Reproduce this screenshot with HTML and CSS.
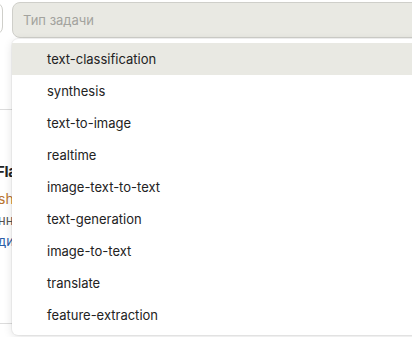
FILE: index.html
```html
<!DOCTYPE html>
<html lang="ru">
<head>
    <meta charset="UTF-8">
    <meta name="viewport" content="width=device-width, initial-scale=1.0">
    <title>Тип задачи</title>
    <link rel="stylesheet" href="styles.css">
</head>
<body>
    <div class="page">
        <div class="filters">
            <div class="field field-prev"></div>
            <div class="field field-select">
                <span class="placeholder">Тип задачи</span>
            </div>
        </div>

        <div class="card">
            <h3 class="card-title">Flash</h3>
            <div class="card-author">shibing</div>
            <div class="card-text">нн</div>
            <div class="card-link">ди</div>
        </div>

        <ul class="dropdown">
            <li class="option active">text-classification</li>
            <li class="option">synthesis</li>
            <li class="option">text-to-image</li>
            <li class="option">realtime</li>
            <li class="option">image-text-to-text</li>
            <li class="option">text-generation</li>
            <li class="option">image-to-text</li>
            <li class="option">translate</li>
            <li class="option">feature-extraction</li>
        </ul>
    </div>
</body>
</html>
```

FILE: styles.css
```css
body {
    font-family: "Inter", "Noto Sans", sans-serif;
    background-color: #fff;
    color: #222;
    margin: 0;
    overflow: hidden;
}
.page {
    position: relative;
    height: 337px;
}
.filters {
    display: flex;
    gap: 9px;
    padding-top: 2px;
}
.field {
    height: 33px;
    border: 1px solid #cfcfca;
    border-radius: 8px;
    background-color: #e9e9e3;
    box-sizing: border-box;
}
.field-prev {
    flex: 0 0 100px;
    margin-left: -97px;
    background-color: #fff;
}
.field-select {
    flex: 1;
    height: 36px;
    margin-right: -20px;
    display: flex;
    align-items: center;
    padding-left: 10px;
}
.placeholder {
    font-size: 13px;
    color: #a3a39e;
}
.card {
    margin-top: 71px;
    border-top: 1px solid #dcdcdc;
    padding-top: 52px;
    padding-left: 0;
    height: 215px;
    border-bottom: 1px solid #dcdcdc;
    box-sizing: border-box;
    text-indent: -2px;
}
.card-title {
    margin: 0 0 6px -2px;
    font-size: 15px;
    font-weight: 700;
    line-height: 20px;
    letter-spacing: -0.3px;
}
.card-author {
    font-size: 14px;
    line-height: 22px;
    color: #b8742f;
}
.card-text {
    font-size: 13px;
    line-height: 21px;
    color: #555;
}
.card-link {
    font-size: 13px;
    line-height: 21px;
    color: #2b5fa8;
}
.dropdown {
    position: absolute;
    top: 39px;
    left: 12px;
    right: -12px;
    margin: 0;
    padding: 4px 0;
    list-style: none;
    background-color: #fff;
    border-radius: 6px;
    box-shadow: 0 2px 10px rgba(0, 0, 0, 0.12), 0 0 0 1px rgba(0, 0, 0, 0.04);
}
.option {
    height: 32px;
    line-height: 32px;
    padding-left: 35px;
    font-size: 13px;
    color: #222;
}
.option.active {
    background-color: #e9e9e3;
}
```
